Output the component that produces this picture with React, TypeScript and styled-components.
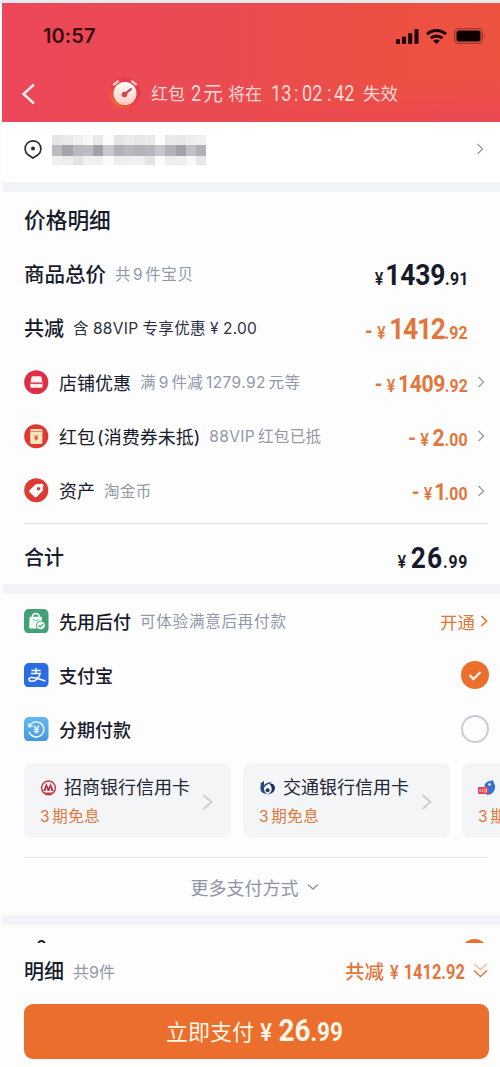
import React from 'react';
import styled, { createGlobalStyle } from 'styled-components';

const ORANGE = '#ec6e2c';
const AMOUNT = '#e2763b';
const INK = '#171a2a';
const MUTED = '#9198a8';

const GlobalStyle = createGlobalStyle`
  * { box-sizing: border-box; }
  html, body { margin: 0; padding: 0; }
  body {
    background: #fdfdfe;
    color: ${INK};
    font-family: Inter, 'Noto Sans CJK SC', sans-serif;
    overflow: hidden;
  }
  svg { display: block; flex: none; }
`;

const Page = styled.div`
  width: 500px;
  height: 1067px;
  padding-left: 2px;
  border-top: 3px solid #e8e9ed;
  display: flex;
  flex-direction: column;
  overflow: hidden;
  white-space: nowrap;
`;

const Header = styled.header`
  height: 119px;
  flex: none;
  background: linear-gradient(172deg, rgba(235, 70, 88, 0) 70%, rgba(235, 70, 88, 0.85) 100%),
    linear-gradient(90deg, #ec475a 0%, #ea4b50 45%, #ec5042 80%, #ec533f 100%);
`;

const StatusBar = styled.div`
  height: 66px;
  padding: 0 14.500px 0 41px;
  display: flex;
  align-items: center;
  justify-content: space-between;
`;

const Clock = styled.span`
  color: #3b0b10;
  font-size: 20px;
  font-weight: 600;
  letter-spacing: 0.1px;
`;

const StatusIcons = styled.div`
  display: flex;
  align-items: center;
  gap: 7px;
`;

const Notice = styled.div`
  height: 50px;
  display: flex;
  align-items: center;
  padding-left: 19px;
  color: #ffd9d6;
  font-size: 17px;
`;

const NoticeIcon = styled.div`
  margin: -2px 9px 0 72px;
`;

const NoticeText = styled.span<{ $size?: number; $left?: number }>`
  font-size: ${(p) => p.$size ?? 17}px;
  margin-left: ${(p) => p.$left ?? 0}px;
  line-height: 24px;
`;

const Digits = styled.span<{ $width: number; $left?: number }>`
  width: ${(p) => p.$width}px;
  margin-left: ${(p) => p.$left ?? 0}px;
  font-family: Roboto, sans-serif;
  font-size: 22px;
  line-height: 24px;
  transform: scaleX(0.82);
  transform-origin: left;
`;

const Address = styled.div`
  height: 60px;
  flex: none;
  padding: 0 16px 6px 22px;
  display: flex;
  align-items: center;
  background: #fff;
`;

const Mosaic = styled.div`
  display: grid;
  grid-template-columns: repeat(15, 10.3px);
  grid-template-rows: 10px 11px 9px;
  margin: 1px auto 0 7px;
`;

const Tile = styled.i<{ $color: string }>`
  background: ${(p) => p.$color};
`;

const Band = styled.div`
  height: 10px;
  flex: none;
  background: #f1f3f6;
`;

const Section = styled.section<{ $height: number }>`
  height: ${(p) => p.$height}px;
  flex: none;
  padding: 0 12px 0 22px;
`;

const Row = styled.div<{ $height?: number; $top?: number }>`
  height: ${(p) => p.$height ?? 54}px;
  padding-top: ${(p) => p.$top ?? 0}px;
  display: flex;
  align-items: center;
`;

const Heading = styled.span<{ $size?: number; $spacing?: number; $top?: number }>`
  padding-top: ${(p) => p.$top ?? 2}px;
  font-size: ${(p) => p.$size ?? 20}px;
  letter-spacing: ${(p) => p.$spacing ?? 0}px;
  font-weight: 500;
  line-height: 30px;
`;

const Label = styled.span<{ $strong?: boolean }>`
  margin-left: 10.500px;
  padding-top: 3px;
  font-size: 18px;
  line-height: 28px;
  word-spacing: -3px;
  font-weight: ${(p) => (p.$strong ? 500 : 400)};
`;

const Note = styled.span<{ $dark?: boolean; $spacing?: number; $size?: number; $word?: number; $top?: number }>`
  margin-left: 9px;
  padding-top: ${(p) => p.$top ?? 2}px;
  font-size: ${(p) => p.$size ?? 15.5}px;
  line-height: 24px;
  letter-spacing: ${(p) => p.$spacing ?? 0.3}px;
  word-spacing: ${(p) => p.$word ?? -2}px;
  color: ${(p) => (p.$dark ? '#2d3040' : MUTED)};
`;

const AmountBox = styled.div<{ $dark?: boolean; $right: number }>`
  margin-left: auto;
  margin-right: ${(p) => p.$right}px;
  padding-top: 5px;
  color: ${(p) => (p.$dark ? INK : AMOUNT)};
  font-family: Roboto, sans-serif;
  font-weight: 700;
  display: flex;
  align-items: baseline;
  line-height: 34px;
  transform: scaleX(0.88);
  transform-origin: right;
`;

const Minus = styled.span`
  font-size: 22px;
  margin-right: 5px;
`;

const Yen = styled.span<{ $size?: number; $gap?: number }>`
  font-family: Inter, sans-serif;
  font-weight: 600;
  font-size: ${(p) => p.$size ?? 17.5}px;
  margin-right: ${(p) => p.$gap ?? 3}px;
`;

const Whole = styled.span<{ $size: number; $spacing?: number }>`
  font-size: ${(p) => p.$size}px;
  letter-spacing: ${(p) => p.$spacing ?? 0}px;
`;

const Fraction = styled.span<{ $spacing?: number }>`
  font-size: 18px;
  letter-spacing: ${(p) => p.$spacing ?? 0.2}px;
`;

const Divider = styled.div<{ $color?: string }>`
  height: 1px;
  background: ${(p) => p.$color ?? '#dfe1e6'};
`;

const Activate = styled.span`
  margin-left: auto;
  display: flex;
  align-items: center;
  gap: 5px;
  color: ${AMOUNT};
  font-size: 17.5px;
`;

const Radio = styled.span<{ $on?: boolean }>`
  width: 28px;
  height: 28px;
  margin-left: auto;
  margin-right: -1px;
  flex: none;
  border-radius: 50%;
  border: ${(p) => (p.$on ? '0' : '2px solid #cbcdd6')};
  background: ${(p) => (p.$on ? ORANGE : 'transparent')};
  display: flex;
  align-items: center;
  justify-content: center;
`;

const Cards = styled.div`
  display: flex;
  gap: 12px;
  width: 478px;
  margin-top: 7px;
  overflow: hidden;
`;

const Card = styled.div`
  width: 207px;
  height: 75px;
  flex: none;
  padding: 2px 18px 0 16px;
  border-radius: 8px;
  background: #f3f5f7;
  display: flex;
  align-items: center;
  justify-content: space-between;
`;

const Bank = styled.div`
  display: flex;
  align-items: center;
  gap: 7px;
  height: 28px;
  padding-top: 2px;
  font-size: 18px;
  line-height: 28px;
  color: #222536;
`;

const Offer = styled.div`
  font-size: 15.5px;
  line-height: 24px;
  padding-top: 4px;
  height: 29px;
  letter-spacing: 0.6px;
  word-spacing: -3px;
  color: ${AMOUNT};
`;

const More = styled.div`
  height: 57px;
  padding: 1px 3px 0 0;
  display: flex;
  align-items: center;
  justify-content: center;
  gap: 8px;
  font-size: 18px;
  color: #8d94a5;
`;

const Peek = styled.div`
  height: 18px;
  flex: none;
  padding: 14px 12px 0 35px;
  overflow: hidden;
  display: flex;
  justify-content: space-between;
  align-items: flex-start;
`;

const PeekHead = styled.i`
  width: 9px;
  height: 10px;
  margin-top: 1px;
  border: 2px solid ${INK};
  border-radius: 50%;
`;

const PeekRadio = styled.i`
  width: 27px;
  height: 27px;
  border-radius: 50%;
  background: ${ORANGE};
`;

const Footer = styled.footer`
  flex: 1;
  padding: 0 12px 0 22px;
`;

const FooterRow = styled.div`
  height: 61px;
  padding-bottom: 4px;
  display: flex;
  align-items: center;
`;

const Saved = styled.span`
  margin: -2px 0 0 auto;
  display: flex;
  align-items: center;
  color: ${AMOUNT};
  font-size: 19.5px;
  font-weight: 500;
`;

const SavedAmount = styled.span`
  width: 83px;
  margin: 2px 0 0 6px;
  font-family: Roboto, sans-serif;
  font-weight: 700;
  font-size: 20px;
  display: flex;
  align-items: baseline;
  transform: scaleX(0.82);
  transform-origin: left;
`;

const PayButton = styled.button`
  width: 465px;
  height: 55px;
  padding: 0 0 3px;
  border: 0;
  border-radius: 9px;
  background: ${ORANGE};
  color: #fff6e6;
  display: flex;
  align-items: center;
  justify-content: center;
  font: 400 22px/32px 'Noto Sans CJK SC', sans-serif;
`;

const PayAmount = styled.span`
  width: 87px;
  margin-left: 6px;
  padding-top: 4px;
  display: flex;
  align-items: baseline;
  font-family: Roboto, sans-serif;
  font-weight: 700;
  transform: scaleX(0.9);
  transform-origin: left;
`;

const Chevron = ({ color = '#9a9da6', w = 6, h = 10, sw = 1.4 }: { color?: string; w?: number; h?: number; sw?: number }) => (
  <svg width={w + 2} height={h + 2} viewBox={`-1 -1 ${w + 2} ${h + 2}`} fill="none" stroke={color} strokeWidth={sw}>
    <path d={`M0.5 0L${w - 0.5} ${h / 2}L0.5 ${h}`} />
  </svg>
);

const AlarmIcon = () => (
  <svg width="34" height="34" viewBox="0 0 34 34">
    <defs>
      <linearGradient id="ring" x1="1" y1="0" x2="0" y2="1">
        <stop offset="0" stopColor="#e02f5c" />
        <stop offset="0.6" stopColor="#e8473f" />
        <stop offset="1" stopColor="#f07a30" />
      </linearGradient>
      <linearGradient id="face" x1="0" y1="0" x2="0" y2="1">
        <stop offset="0" stopColor="#fff" />
        <stop offset="1" stopColor="#ffc9bd" />
      </linearGradient>
    </defs>
    <circle cx="17" cy="17" r="15.500" fill="url(#ring)" />
    <path d="M6 8.500l4-3.300M24 5.200l4 3.300" stroke="#ffc3bd" strokeWidth="2.400" strokeLinecap="round" />
    <circle cx="17" cy="17.500" r="11.500" fill="url(#face)" />
    <path d="M17 18l6-5" stroke="#b8404a" strokeWidth="2" strokeLinecap="round" />
    <circle cx="16.500" cy="18.500" r="2.800" fill="#d24650" />
  </svg>
);

const SignalIcon = () => (
  <svg width="23" height="15" viewBox="0 0 23 15" fill="#1c0203">
    <rect x="0" y="10" width="4" height="5" rx="1" />
    <rect x="6" y="7.500" width="4" height="7.500" rx="1" />
    <rect x="12.200" y="4" width="4" height="11" rx="1" />
    <rect x="18.500" y="0" width="4" height="15" rx="1" />
  </svg>
);

const WifiIcon = () => (
  <svg width="21" height="15" viewBox="0 0 21 15" fill="none" stroke="#1c0203" strokeWidth="2.900">
    <path d="M1 5.200C6.400 0.200 14.600 0.200 20 5.200" />
    <path d="M4.600 9.200C8 6.200 13 6.200 16.400 9.200" />
    <path d="M10.500 15L7.200 11.800C9.100 10.200 11.900 10.200 13.800 11.800Z" fill="#1c0203" stroke="none" />
  </svg>
);

const BatteryIcon = () => (
  <svg width="32" height="16" viewBox="0 0 32 16">
    <rect x="0.700" y="0.700" width="27.600" height="14.600" rx="4" fill="none" stroke="#8e3024" strokeWidth="1.100" />
    <rect x="2.500" y="2.500" width="24" height="11" rx="2.200" fill="#0d0000" />
    <path d="M30 5.800v4.400q1.700-2.200 0-4.400z" fill="#8e3024" />
  </svg>
);

const PinIcon = () => (
  <svg width="21" height="21" viewBox="0 0 21 21">
    <path
      d="M9 19.200Q11 17.500 14 15.800A7.900 7.900 0 1 0 4 15.800Q7 17.500 9 19.200Z"
      fill="none"
      stroke="#2b2d36"
      strokeWidth="1.700"
      strokeLinejoin="round"
    />
    <circle cx="9" cy="9.500" r="2" fill="#2b2d36" />
  </svg>
);

const ShopIcon = () => (
  <svg width="24.500" height="24.500" viewBox="0 0 25 25">
    <circle cx="12.500" cy="12.500" r="12.300" fill="#e02f45" />
    <path d="M9 6.500h7.500q1 0 1.300 1l.7 3.500v1.800H7V11l.7-3.500q.3-1 1.300-1z" fill="#fff3f2" />
    <path d="M6.500 12q1.500 2.300 3 .3 1.500 2 3.200 0 1.700 2 3.200 0 1.600 2 3-.3v5q0 1.200-1.300 1.200H7.800q-1.300 0-1.300-1.200z" fill="#fff3f2" />
    <path d="M6.500 12.800q1.500 1.700 3 .3 1.500 1.500 3.200 0 1.700 1.500 3.200 0 1.600 1.400 3-.3" fill="none" stroke="#e02f45" strokeWidth="1.100" />
  </svg>
);

const PacketIcon = () => (
  <svg width="24.500" height="24.500" viewBox="0 0 25 25">
    <circle cx="12.500" cy="12.500" r="12.300" fill="#dd3931" />
    <rect x="6.300" y="5" width="12.500" height="15.500" rx="1.500" fill="#ffe5b8" />
    <path d="M6.300 7.500h12.500" stroke="#e87458" strokeWidth="1" />
    <path d="M10.800 11.300l1.700 2.200 1.700-2.200M12.500 13.300v3.500M10.800 13.700h3.400M10.800 15.200h3.400" stroke="#dd3931" strokeWidth="0.900" fill="none" />
  </svg>
);

const TagIcon = () => (
  <svg width="24.500" height="24.500" viewBox="0 0 25 25">
    <circle cx="12.500" cy="12.500" r="12.300" fill="#de3a31" />
    <path d="M12 6.500l6-.7q1.700 0 1.700 1.700l-.6 5.500-6.300 6.300q-1 .9-2 0L5.700 14.500q-.9-1 0-2z" fill="#fff" />
    <circle cx="14.800" cy="11" r="1.700" fill="#d03848" />
  </svg>
);

const BagIcon = () => (
  <svg width="24.500" height="24.500" viewBox="0 0 25 25">
    <rect width="25" height="25" rx="5" fill="#43a076" />
    <path d="M8.500 9V8q.3-3.300 3.500-3.300T15.600 8v1" fill="none" stroke="#f0fff7" strokeWidth="1.500" />
    <path d="M5.800 8h12.400l.6 11q0 .8-1 .8H6.200q-1 0-1-.8z" fill="#f0fff7" />
    <path d="M9 10.300q3 3 6 0" fill="none" stroke="#8cc9ab" strokeWidth="1.100" />
    <circle cx="17.200" cy="16.800" r="4.500" fill="#f0fff7" stroke="#43a076" strokeWidth="1" />
    <path d="M15 16.800l1.600 1.600 2.900-3" fill="none" stroke="#43a076" strokeWidth="1.200" />
  </svg>
);

const AlipayIcon = () => (
  <svg width="24.500" height="24.500" viewBox="0 0 25 25">
    <rect width="25" height="25" rx="5" fill="#2c6be6" />
    <g fill="none" stroke="#fff" strokeWidth="1.500">
      <path d="M7.500 7.600h9.500M12.300 5v5.500M7 10.700h9.500C15.400 14.800 12 18.800 8 18.700 4.300 18.500 4.300 15.400 7.200 14.800 11 14 16 16.500 22 18.500" />
    </g>
  </svg>
);

const InstallmentIcon = () => (
  <svg width="24.500" height="24.500" viewBox="0 0 25 25">
    <defs>
      <linearGradient id="sky" x1="0" y1="0" x2="0" y2="1">
        <stop offset="0" stopColor="#62b8ec" />
        <stop offset="1" stopColor="#4997e0" />
      </linearGradient>
    </defs>
    <rect width="25" height="25" rx="5" fill="url(#sky)" />
    <g fill="none" stroke="#e9fbff" strokeWidth="1.400">
      <path d="M5.500 9.500A7.700 7.700 0 1 1 5.200 15M4.500 6.500l.8 3.600 3.500-.8" />
      <path d="M10 9l2.700 3 2.700-3M12.700 12v5M10 12.600h5.400M10 14.800h5.400" />
    </g>
  </svg>
);

const MerchantsLogo = () => (
  <svg width="17" height="16" viewBox="0 0 17 16">
    <circle cx="8.500" cy="7.800" r="6.900" fill="none" stroke="#bd3f4b" strokeWidth="1.500" />
    <path d="M6.300 3L3.300 11h2.300l1-3.500.9 3.500h2l.9-3.500 1 3.500h2.300L10.700 3 8.500 8z" fill="#b93745" />
    <path d="M3.500 12.600q5 3 10 0z" fill="#b93745" />
  </svg>
);

const CommLogo = () => (
  <svg width="17" height="16" viewBox="0 0 17 16">
    <path d="M1.800 3.200L5 0.800V5Q8.600 1.600 13 2.600L8.500 4.400Q4.600 6 5 9.500T8.200 14Q1.600 13.500 1.400 8.500z" fill="#244a78" />
    <path d="M10 3.600Q16 3 16 8.300 15.300 13.800 8 14.500q4.700-2 4.800-5.500 0-3-2.800-5.400z" fill="#182f58" />
    <circle cx="8.600" cy="10.300" r="2" fill="#1c3b68" />
  </svg>
);

const MascotLogo = () => (
  <svg width="18" height="16" viewBox="0 0 18 16">
    <path d="M6.500 5Q8.500 1 12.500 1L15 0l.5 2.300Q18.500 6.500 16 11q-3.500 5-8 3.500z" fill="#3770d2" />
    <circle cx="11.500" cy="4.500" r="1.300" fill="#e7f2ff" />
    <rect x="0" y="7" width="10.500" height="7" rx="1" fill="#dd4656" />
    <path d="M2 8.800v3.400M4.200 8.800v3.400M6.300 9h2.300v3H6.300z" stroke="#ffdce0" strokeWidth=".8" fill="none" />
  </svg>
);

const DoubleDown = () => (
  <svg width="15" height="15" viewBox="0 0 15 15" fill="none" strokeWidth="1.500">
    <path d="M1 1l6.500 5.500L14 1" stroke="#f2bd9d" />
    <path d="M1 7.500L7.500 13.500 14 7.500" stroke={AMOUNT} />
  </svg>
);

type AmountProps = {
  whole: string;
  fraction: string;
  dark?: boolean;
  minus?: boolean;
  small?: boolean;
  right?: number;
  spacing?: number;
  gap?: number;
  tail?: number;
};

const Amount = ({ whole, fraction, dark, minus, small, right = 20, spacing, gap = 3, tail }: AmountProps) => (
  <AmountBox $dark={dark} $right={right}>
    {minus && <Minus>-</Minus>}
    <Yen $gap={gap}>¥</Yen>
    <Whole $size={small ? 24 : 30} $spacing={spacing}>{whole}</Whole>
    <Fraction $spacing={tail}>{fraction}</Fraction>
  </AmountBox>
);

const RowEnd = styled.span`
  width: 3px;
`;

const mosaicColors = [
  '#e6e6e8', '#e9e9eb', '#f0f0f1', '#f7f7f8', '#e9e9ea', '#fbfbfb', '#e4e4e6', '#ebebec', '#e7e7e9', '#eaeaeb', '#fdfdfd', '#e9e9ea', '#e8e8e9', '#ededee', '#f1f1f2',
  '#bbbcc0', '#a4a5ab', '#b9babd', '#bcbdc0', '#a2a3aa', '#c8c9cc', '#b1b2b7', '#b9babd', '#b3b4b8', '#b6b7bb', '#c6c7ca', '#b2b3b8', '#a3a4aa', '#c1c2c5', '#b1b2b7',
  '#efeff0', '#ededee', '#e2e2e5', '#f0f0f1', '#f0f0f1', '#fafafa', '#eeeeef', '#efeff0', '#f0f0f1', '#e4e4e6', '#fcfcfc', '#ededee', '#eeeeef', '#f9f9f9', '#e8e8ea',
];

const deductions = [
  { icon: <ShopIcon />, label: '店铺优惠', note: '满 9 件减 1279.92 元等', whole: '1409', fraction: '.92', spacing: -0.5, gap: 3 },
  { icon: <PacketIcon />, label: '红包 (消费券未抵)', note: '88VIP 红包已抵', whole: '2', fraction: '.00', gap: 4 },
  { icon: <TagIcon />, label: '资产', note: '淘金币', whole: '1', fraction: '.00', spacing: -2, gap: 2 },
];

const cards = [
  { logo: <MerchantsLogo />, name: '招商银行信用卡' },
  { logo: <CommLogo />, name: '交通银行信用卡' },
  { logo: <MascotLogo />, name: '' },
];

export default function App() {
  return (
    <Page>
      <GlobalStyle />
      <Header>
        <StatusBar>
          <Clock>10:57</Clock>
          <StatusIcons>
            <SignalIcon />
            <WifiIcon />
            <BatteryIcon />
          </StatusIcons>
        </StatusBar>
        <Notice>
          <svg width="15" height="22" viewBox="0 0 15 22" fill="none" stroke="#fff0ee" strokeWidth="2.400">
            <path d="M13 1.500L2.500 11 13 20.500" />
          </svg>
          <NoticeIcon>
            <AlarmIcon />
          </NoticeIcon>
          <NoticeText>红包</NoticeText>
          <Digits $width={12} $left={6}>2</Digits>
          <NoticeText $size={20}>元</NoticeText>
          <NoticeText $left={5}>将在</NoticeText>
          <Digits $width={23} $left={9}>13</Digits>
          <Digits $width={8}>:</Digits>
          <Digits $width={25}>02</Digits>
          <Digits $width={7}>:</Digits>
          <Digits $width={23}>42</Digits>
          <NoticeText $size={17.5} $left={6}>失效</NoticeText>
        </Notice>
      </Header>
      <Address>
        <PinIcon />
        <Mosaic>
          {mosaicColors.map((c, i) => (
            <Tile key={i} $color={c} />
          ))}
        </Mosaic>
        <Chevron />
      </Address>
      <Band />
      <Section $height={392}>
        <Row $height={55}>
          <Heading $size={21.7} $top={0}>价格明细</Heading>
        </Row>
        <Row>
          <Heading $size={20.5}>商品总价</Heading>
          <Note $word={-3} $spacing={0.6}>共 9 件宝贝</Note>
          <Amount dark whole="1439" fraction=".91" spacing={-0.2} gap={2} />
        </Row>
        <Row>
          <Heading>共减</Heading>
          <Note $dark $word={-0.5}>含 88VIP 专享优惠 ¥ 2.00</Note>
          <Amount minus whole="1412" fraction=".92" spacing={-1.5} gap={4} />
        </Row>
        {deductions.map((d) => (
          <Row key={d.label} $height={54.3}>
            {d.icon}
            <Label>{d.label}</Label>
            <Note $spacing={0.4}>{d.note}</Note>
            <Amount minus small right={9} whole={d.whole} fraction={d.fraction} spacing={d.spacing} gap={d.gap} />
            <Chevron />
            <RowEnd />
          </Row>
        ))}
        <Row $height={5} />
        <Divider />
        <Row $height={65} $top={2}>
          <Heading>合计</Heading>
          <Amount dark whole="26" fraction=".99" spacing={1.2} gap={5} tail={0.8} />
        </Row>
      </Section>
      <Band />
      <Section $height={321}>
        <Row>
          <BagIcon />
          <Label $strong>先用后付</Label>
          <Note $spacing={0.8}>可体验满意后再付款</Note>
          <Activate>
            开通
            <Chevron color={AMOUNT} w={6} h={10} sw={1.7} />
          </Activate>
        </Row>
        <Row>
          <AlipayIcon />
          <Label $strong>支付宝</Label>
          <Radio $on>
            <svg width="14" height="11" viewBox="0 0 14 11" fill="none" stroke="#fff2e4" strokeWidth="2.300">
              <path d="M1.500 5l4 4L12.500 2" />
            </svg>
          </Radio>
        </Row>
        <Row>
          <InstallmentIcon />
          <Label $strong>分期付款</Label>
          <Radio />
        </Row>
        <Cards>
          {cards.map((c, i) => (
            <Card key={i}>
              <div>
                <Bank>
                  {c.logo}
                  {c.name}
                </Bank>
                <Offer>3 期免息</Offer>
              </div>
              <Chevron color="#c9ccd3" w={9} h={14} sw={1.8} />
            </Card>
          ))}
        </Cards>
        <Row $height={19} />
        <Divider $color="#e9ebee" />
        <More>
          更多支付方式
          <svg width="12" height="8" viewBox="0 0 12 8" fill="none" stroke="#8d94a5" strokeWidth="1.400">
            <path d="M1 1.500l5 4.500 5-4.500" />
          </svg>
        </More>
      </Section>
      <Band />
      <Peek>
        <PeekHead />
        <PeekRadio />
      </Peek>
      <Footer>
        <FooterRow>
          <Heading $top={0}>明细</Heading>
          <Note $spacing={0} $size={16} $top={0}>共9件</Note>
          <Saved>
            共减
            <SavedAmount>
              <Yen $size={19} $gap={6}>¥</Yen>
              <span>1412.92</span>
            </SavedAmount>
            <DoubleDown />
          </Saved>
        </FooterRow>
        <PayButton>
          立即支付
          <PayAmount>
            <Yen $size={24} $gap={7}>¥</Yen>
            <Whole $size={31}>26</Whole>
            <Whole $size={25}>.99</Whole>
          </PayAmount>
        </PayButton>
      </Footer>
    </Page>
  );
}
